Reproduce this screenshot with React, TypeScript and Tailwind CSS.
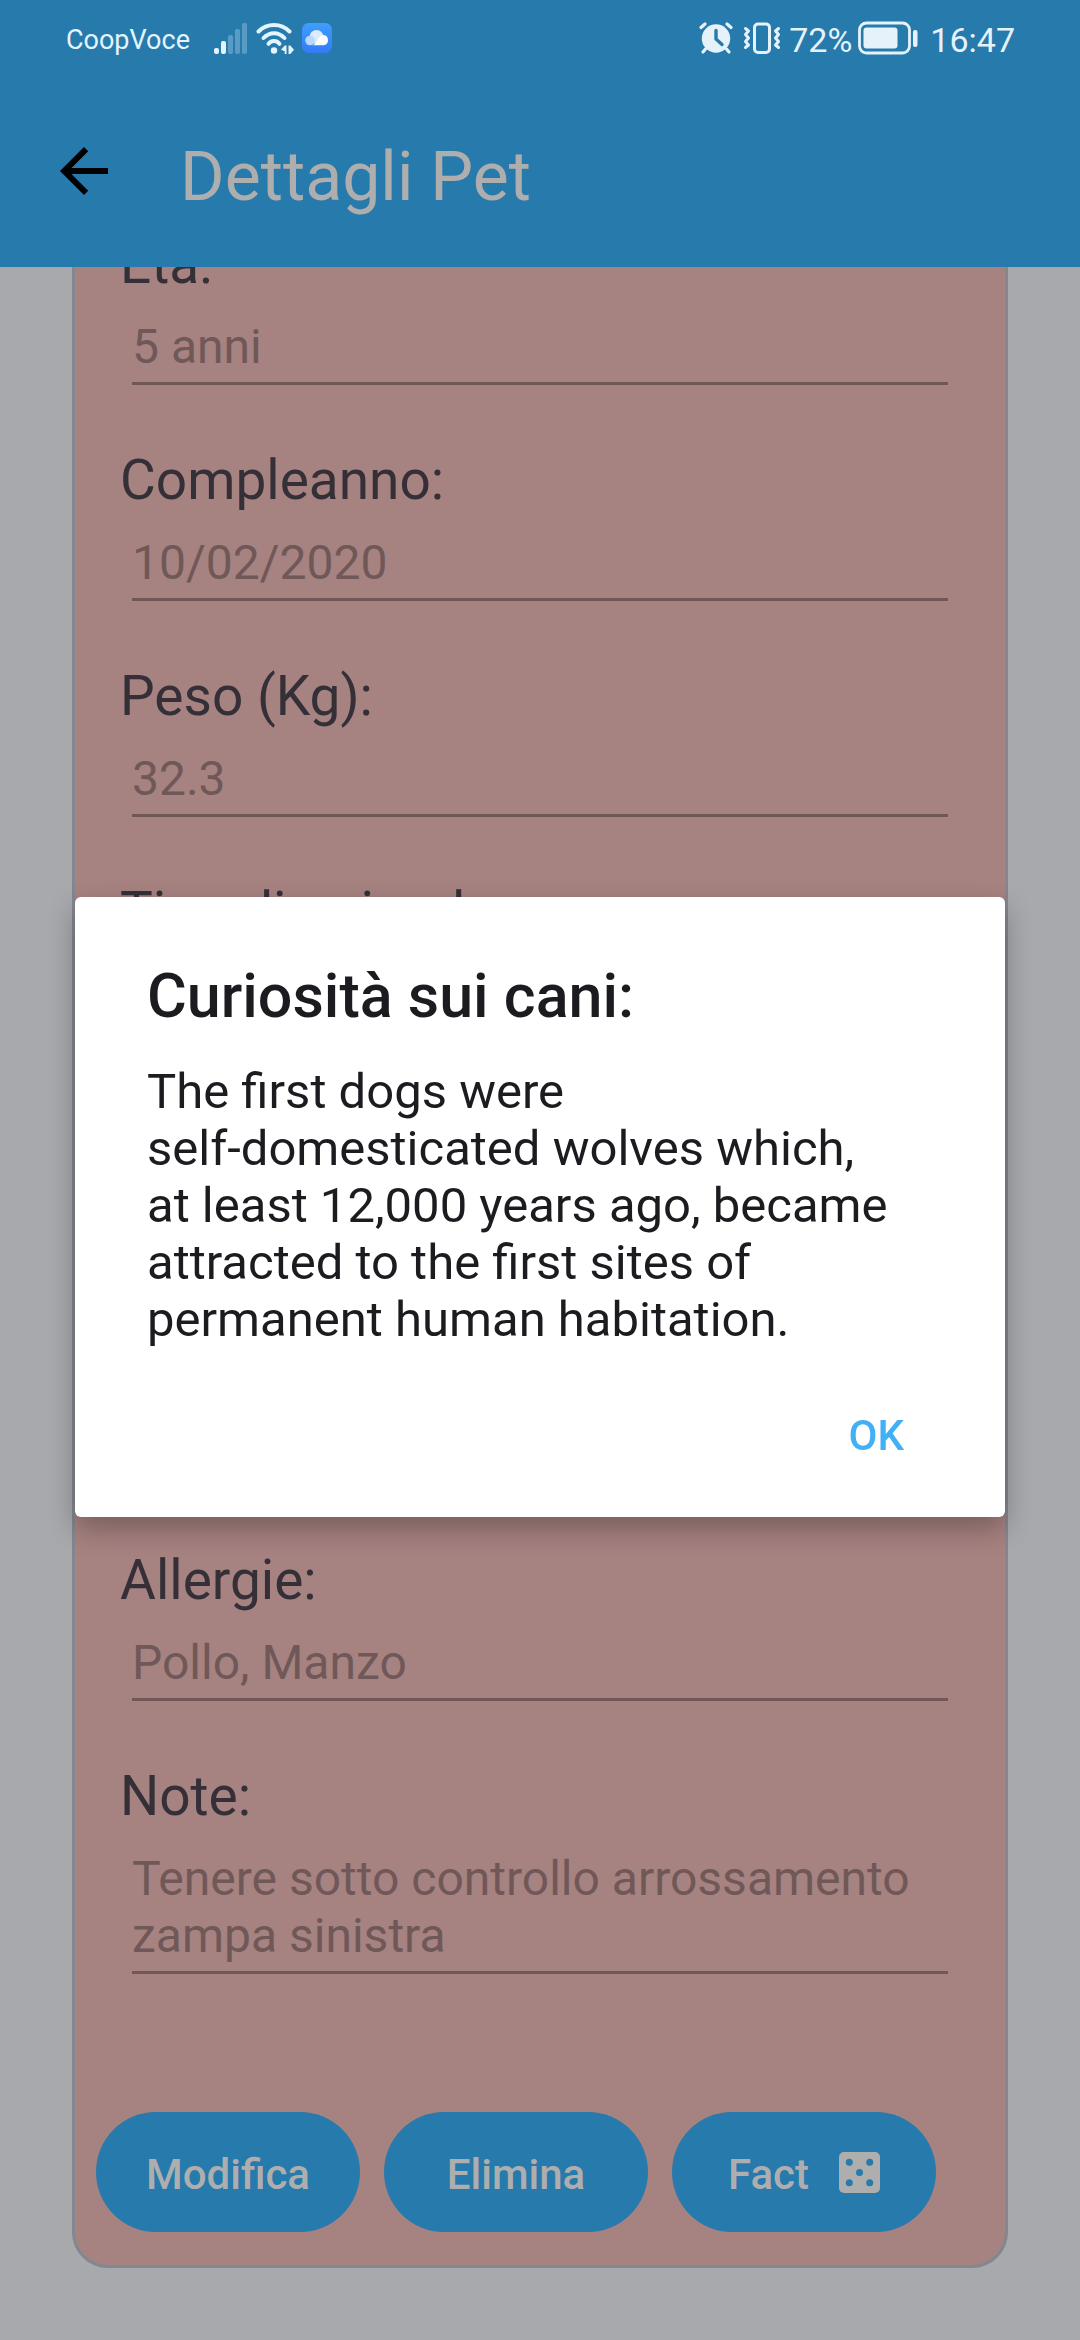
import type { ReactNode } from 'react';

function SignalIcon() {
  return (
    <svg className="h-8 w-[34px] shrink-0" viewBox="0 0 34 32" aria-hidden="true">
      <rect x="0" y="26" width="5" height="6" rx="2" fill="#e3f4fe" />
      <rect x="7" y="19" width="5" height="13" rx="2" fill="#e3f4fe" />
      <rect x="14" y="13" width="5" height="19" rx="2" fill="#5a9bc3" />
      <rect x="21" y="7" width="5" height="25" rx="2" fill="#5a9bc3" />
      <rect x="28" y="1" width="5" height="31" rx="2" fill="#5a9bc3" />
    </svg>
  );
}

function WifiIcon() {
  return (
    <svg className="h-8 w-[38px] shrink-0" viewBox="0 0 38 32" aria-hidden="true">
      <g fill="none" stroke="#e3f4fe" strokeWidth="4" strokeLinecap="round">
        <path d="M2.5 9.5C11 .8 25 .8 33.500 9.500" />
        <path d="M7.500 16C13.500 9.500 22.500 9.500 28.500 16" />
        <path d="M12.500 21.800C15.500 18.200 20.500 18.200 23.500 21.800" />
      </g>
      <circle cx="18" cy="28.500" r="3.200" fill="#e3f4fe" />
      <path d="M30.500 23.500v8.500h-1.800v-2.800L25 27.800l3.700-4.300zM32.500 23.500h1.800l3.700 4.300-3.700 4.200h-1.800z" fill="#e3f4fe" />
    </svg>
  );
}

function CloudIcon() {
  return (
    <svg className="h-[30px] w-[30px] shrink-0" viewBox="0 0 30 30" aria-hidden="true">
      <defs>
        <linearGradient id="cloudTile" x1="0" y1="0" x2="0" y2="1">
          <stop offset="0" stopColor="#3f9efd" />
          <stop offset="1" stopColor="#3579f6" />
        </linearGradient>
      </defs>
      <rect width="30" height="30" rx="6.500" fill="url(#cloudTile)" />
      <circle cx="14.500" cy="14" r="7" fill="#dcecff" />
      <circle cx="8" cy="17.500" r="4.800" fill="#b9d8ff" />
      <path d="M8.500 22.300c4.500 0 5.500-2.300 7-5 1.600-3 3.200-5.300 6-5.300a5.200 5.200 0 0 1 0 10.300z" fill="#ffffff" />
    </svg>
  );
}

function AlarmIcon() {
  return (
    <svg className="h-8 w-[34px] shrink-0" viewBox="0 0 34 32" aria-hidden="true">
      <circle cx="17" cy="16.500" r="14.200" fill="#e6f2f9" />
      <g stroke="#e6f2f9" strokeWidth="3.200" strokeLinecap="round">
        <path d="M2 5.500 6 2M32 5.500 28 2M6.500 27l-2.500 3M27.500 27l2.500 3" />
      </g>
      <path d="M17 8.500v8.500l6 5.500" fill="none" stroke="#277aac" strokeWidth="3.400" strokeLinecap="round" strokeLinejoin="round" />
    </svg>
  );
}

function VibrateIcon() {
  return (
    <svg className="h-8 w-[38px] shrink-0" viewBox="0 0 38 32" aria-hidden="true">
      <g fill="none" stroke="#e6f2f9" strokeWidth="3" strokeLinecap="round" strokeLinejoin="round">
        <rect x="11.500" y="2" width="15" height="28.500" rx="3.500" />
        <path d="M2.500 6.500 5.500 9l-3 3.500 3 3.500-3 3.500 3 3.500-3 2.500" />
        <path d="M35.500 6.500 32.500 9l3 3.500-3 3.500 3 3.500-3 3.500 3 2.500" />
      </g>
    </svg>
  );
}

function BatteryIcon() {
  return (
    <svg className="h-[34px] w-[60px] shrink-0" viewBox="0 0 60 34" aria-hidden="true">
      <rect x="1.500" y="2" width="50" height="30" rx="7" fill="none" stroke="#e6f2f9" strokeWidth="2.800" />
      <rect x="5.500" y="6.500" width="34" height="21" rx="3" fill="#e6f2f9" />
      <rect x="55" y="9" width="4.500" height="17" rx="2" fill="#e6f2f9" />
    </svg>
  );
}

function BackIcon() {
  return (
    <svg className="size-[72px]" viewBox="0 0 24 24" fill="currentColor" aria-hidden="true">
      <path d="M20 11H7.830l5.590-5.590L12 4l-8 8 8 8 1.410-1.410L7.830 13H20z" />
    </svg>
  );
}

function DiceIcon() {
  return (
    <svg className="size-[41px] shrink-0" viewBox="0 0 41 41" aria-hidden="true">
      <rect width="41" height="41" rx="5" fill="#aeaeae" />
      <g fill="#277aac">
        <circle cx="10.300" cy="10.300" r="3.500" />
        <circle cx="30.700" cy="10.300" r="3.500" />
        <circle cx="20.500" cy="20.500" r="3.500" />
        <circle cx="10.300" cy="30.700" r="3.500" />
        <circle cx="30.700" cy="30.700" r="3.500" />
      </g>
    </svg>
  );
}

function StatusBar() {
  return (
    <div className="flex h-20 items-center justify-between pr-[65px] pl-[66px] text-[34px] leading-10 text-[#e6f2f9]">
      <div className="flex items-center pb-1">
        <span className="mr-6 pt-1 text-[27px] text-[#e3f4fe]">CoopVoce</span>
        <SignalIcon />
        <span className="ml-2 flex items-center gap-2">
          <WifiIcon />
          <CloudIcon />
        </span>
      </div>
      <div className="flex items-center pb-1">
        <AlarmIcon />
        <span className="ml-2.5">
          <VibrateIcon />
        </span>
        <span className="mr-1.5 ml-2 pt-1">72%</span>
        <BatteryIcon />
        <time className="ml-3 pt-1">16:47</time>
      </div>
    </div>
  );
}

const labelClass = 'block text-[55px] leading-[66px] text-[#352f37]';
const fieldClass =
  'mx-3 mt-[21px] block resize-none border-b-3 border-[#705858] bg-transparent pb-[7px] text-[48px] leading-[57px] text-[#705858] outline-none';

function Field({ id, label, value }: { id: string; label: string; value: string }) {
  return (
    <div className="flex flex-col">
      <label htmlFor={id} className={labelClass}>{label}</label>
      <input id={id} defaultValue={value} readOnly className={`${fieldClass} h-[67px]`} />
    </div>
  );
}

function ActionButton({ children }: { children: ReactNode }) {
  return (
    <button
      type="button"
      className="flex h-[120px] flex-1 items-center justify-center rounded-full bg-[#277aac] text-[42px] leading-[50px] font-medium text-[#aeaeae]"
    >
      {children}
    </button>
  );
}

export default function App() {
  return (
    <div className="flex h-screen flex-col bg-[#a8a9ad] font-[Roboto,sans-serif]">
      <header className="shrink-0 bg-[#277aac]">
        <StatusBar />
        <div className="flex h-[187px] items-center pb-1.5 pl-12">
          <button type="button" aria-label="Indietro" className="text-black">
            <BackIcon />
          </button>
          <h1 className="ml-[60px] pt-3 text-[68px] leading-[76px] text-[#aeaeae]">Dettagli Pet</h1>
        </div>
      </header>

      {/* The reversed column keeps the form scrolled to its end. */}
      <main className="flex min-h-0 flex-1 flex-col-reverse overflow-y-auto px-[72px] pb-[72px] [scrollbar-width:none]">
        <form className="flex shrink-0 flex-col rounded-[36px] border-3 border-[#83878e] bg-[#a68281] pt-12 pb-[33px]">
          <div className="flex flex-col gap-[62px] px-[45px]">
            <Field id="eta" label="Età:" value="5 anni" />
            <Field id="compleanno" label="Compleanno:" value="10/02/2020" />
            <Field id="peso" label="Peso (Kg):" value="32.3" />
            <div className="h-[606px]">
              <span className={labelClass}>Tipo di animale:</span>
            </div>
            <Field id="allergie" label="Allergie:" value="Pollo, Manzo" />
            <div className="flex flex-col">
              <label htmlFor="note" className={labelClass}>Note:</label>
              <textarea
                id="note"
                rows={2}
                readOnly
                defaultValue="Tenere sotto controllo arrossamento zampa sinistra"
                className={`${fieldClass} overflow-hidden`}
              />
            </div>
          </div>
          <div className="mt-[138px] flex gap-6 pr-[69px] pl-[21px]">
            <ActionButton>
              <span className="pt-1.5">Modifica</span>
            </ActionButton>
            <ActionButton>
              <span className="pt-1.5">Elimina</span>
            </ActionButton>
            <ActionButton>
              <span className="mr-[30px] pt-1.5">Fact</span>
              <DiceIcon />
            </ActionButton>
          </div>
        </form>
      </main>

      <div className="fixed inset-0 flex items-center justify-center px-[75px] pt-[74px]">
        <div
          role="dialog"
          aria-modal="true"
          aria-labelledby="fact-title"
          className="flex w-full flex-col rounded-md bg-white pt-16 pb-[27px] text-[#1d1b20] shadow-[0_12px_28px_rgba(0,0,0,0.28)]"
        >
          <h2 id="fact-title" className="px-[72px] text-[61px] leading-[70px] font-medium">Curiosità sui cani:</h2>
          <p className="mt-8 pr-[105px] pl-[72px] text-[49px] leading-[57px]">
            The first dogs were
            <br />
            self-domesticated wolves which, at least 12,000 years ago, became attracted to the first sites of permanent
            human habitation.
          </p>
          <button
            type="button"
            className="mt-[34px] mr-[65px] h-[108px] self-end px-9 text-[42px] leading-[50px] font-medium text-[#42b0f5]"
          >
            OK
          </button>
        </div>
      </div>
    </div>
  );
}
